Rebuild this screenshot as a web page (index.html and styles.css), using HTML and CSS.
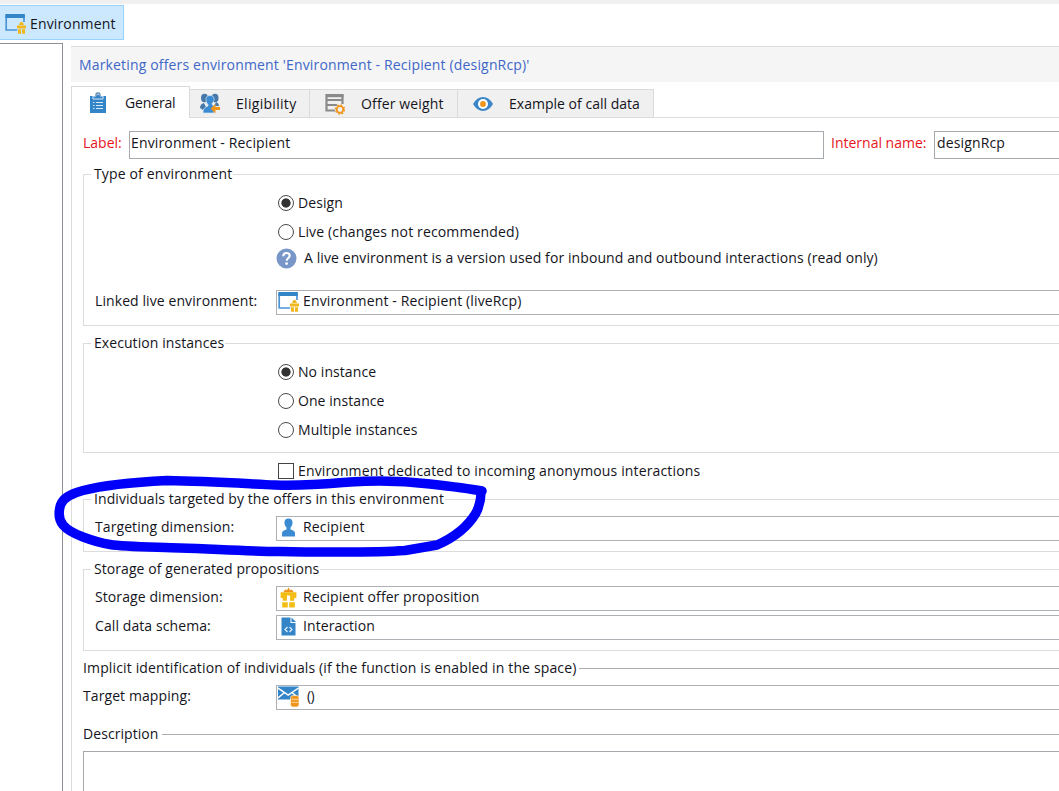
FILE: index.html
```html
<!DOCTYPE html>
<html lang="en">
<head>
<meta charset="utf-8">
<title>Environment</title>
<link rel="stylesheet" href="styles.css">
</head>
<body>
<svg class="defs" aria-hidden="true">
  <symbol id="env" viewBox="0 0 21 21">
    <path d="M1.2 2v15h11M19 2v7" fill="none" stroke="#4a94d6" stroke-width="1.7"/>
    <path d="M.4 1h19.4v4H.4z" fill="#3484c8"/>
    <path d="M12 12.5h9v3h-9zM13 16.3h3v4.4h-3zM17 16.3h3v4.4h-3zM14 12l1-2.500 1.500-.8 1.500.8 1 2.500z" fill="#f0b81c"/>
  </symbol>
  <symbol id="gift" viewBox="0 0 16 20">
    <path d="M3 5l1.800-2.600L6.500 3 8 .5 9.500 3l1.700-.6L13 5z" fill="#f0951c"/>
    <path d="M.5 5h15v5.500h-2V13h-4V8h-3v5h-4v-2.500h-2zM2 14.500h5.300V19.500H2zM8.700 14.500H14V19.500H8.700z" fill="#f2bd14"/>
  </symbol>
</svg>

<header class="toolbar">
  <div class="tool"><svg class="i21"><use href="#env"/></svg><span class="loose">Environment</span></div>
</header>

<div class="workspace">
  <aside class="tree"></aside>
  <main class="main">
    <h1 class="title">Marketing offers environment 'Environment - Recipient (designRcp)'</h1>

    <nav class="tabs">
      <div class="tab active">
        <svg class="tab-icon" viewBox="0 0 20 22"><path d="M2 4h16v17H2z" fill="#3484c8"/><path d="M5 7V4h3a2 2 0 0 1 4 0h3v3z" fill="#3484c8" stroke="#fff" stroke-width=".8"/><path d="M8 4V2.500Q8 1 10 1t2 1.500V4" fill="none" stroke="#5f88ac" stroke-width="1.300"/><path d="M5 10.500h1.500M8 10.500h7M5 13.500h1.500M8 13.500h7M5 16.500h1.500M8 16.500h7" stroke="#d6e9fa" stroke-width="1.200"/></svg>
        <span>General</span>
      </div>
      <div class="tab eligibility">
        <svg class="tab-icon" viewBox="0 0 20 22"><g fill="#4779a8"><ellipse cx="4.500" cy="5" rx="3.500" ry="4.300"/><ellipse cx="15" cy="5" rx="3.500" ry="4.300"/><path d="M0 15q0-4 4-5l2 4-3 3zM19 13q0-3-3-4l-2 4z"/></g><path d="M10 2.500c-3 0-4.200 2-4 4.500.2 2.200 1 3.500 2 4.500v1.500c-3 1-5 2.500-5 7h11v-7l-2-1.500v-1c1-1 2-2.500 2-4 .2-2.500-1-4-4-4z" fill="#3a8bd2" stroke="#d5e7f6" stroke-width=".7"/><path d="M10.500 15.500l5-4.500v3h4.500v3h-4.500v3.500z" fill="#f0951c"/></svg>
        <span>Eligibility</span>
      </div>
      <div class="tab weight">
        <svg class="tab-icon" viewBox="0 0 20 22"><path d="M10 17.500H1.500V2h16v9M2 7h15M2 12h10" fill="none" stroke="#8a8a8a" stroke-width="2.200"/><path d="M1 1.500h17.500v2.700H1z" fill="#8a8a8a"/><circle cx="15" cy="16.500" r="3.300" fill="none" stroke="#f0951c" stroke-width="1.800"/><circle cx="15" cy="16.500" r="4.500" fill="none" stroke="#f0951c" stroke-width="1.400" stroke-dasharray="1.770 1.760"/></svg>
        <span>Offer weight</span>
      </div>
      <div class="tab example">
        <svg class="tab-icon" viewBox="0 0 20 22"><path d="M0 11Q4 4 10 4t10 7q-4 7-10 7T0 11z" fill="#3a86c8"/><circle cx="10" cy="11" r="5" fill="#fff"/><circle cx="10" cy="11" r="2.900" fill="#f0951c"/></svg>
        <span>Example of call data</span>
      </div>
    </nav>

    <section class="panel">
      <div class="names">
        <label class="required lbl">Label:</label>
        <div class="input label-input"><span class="loose">Environment - Recipient</span></div>
        <label class="required internal">Internal name:</label>
        <div class="input name-input"><span class="loose">designRcp</span></div>
      </div>

      <fieldset class="group type">
        <legend class="loose">Type of environment</legend>
        <div class="option"><i class="radio on"></i><span>Design</span></div>
        <div class="option second"><i class="radio"></i><span class="loose">Live (changes not recommended)</span></div>
        <div class="hint"><svg class="i21" viewBox="0 0 21 21"><circle cx="10.500" cy="10.500" r="10" fill="#7897c8"/><path d="M7.300 8.200Q7.300 5 10.500 5t3.200 2.800c0 2.200-3 2.400-3 5" fill="none" stroke="#fff" stroke-width="2.100"/><circle cx="10.600" cy="15.600" r="1.400" fill="#fff"/></svg><span>A live environment is a version used for inbound and outbound interactions (read only)</span></div>
        <div class="row linked"><label>Linked live environment:</label><div class="field"><svg class="i21"><use href="#env"/></svg><span class="loose">Environment - Recipient (liveRcp)</span></div></div>
      </fieldset>

      <fieldset class="group instances">
        <legend>Execution instances</legend>
        <div class="option"><i class="radio on"></i><span>No instance</span></div>
        <div class="option"><i class="radio"></i><span>One instance</span></div>
        <div class="option"><i class="radio"></i><span>Multiple instances</span></div>
      </fieldset>

      <div class="option anonymous"><i class="check"></i><span class="loose">Environment dedicated to incoming anonymous interactions</span></div>

      <fieldset class="group individuals">
        <legend>Individuals targeted by the offers in this environment</legend>
        <div class="row"><label>Targeting dimension:</label><div class="field"><svg class="i21" viewBox="0 0 21 21"><path d="M10.500 1.500c-3 0-4.300 2-4 4.700.2 2 1 3.300 2 4.300v2c-2 .8-4.500 1.500-4.500 3.500V19.500h13V16c0-2-2.500-2.700-4.500-3.500v-2c1-1 1.800-2.300 2-4.300.3-2.700-1-4.700-4-4.700z" fill="#3a8bd2"/></svg><span class="loose">Recipient</span></div></div>
      </fieldset>

      <fieldset class="group storage">
        <legend>Storage of generated propositions</legend>
        <div class="row"><label>Storage dimension:</label><div class="field"><svg class="i21"><use href="#gift"/></svg><span>Recipient offer proposition</span></div></div>
        <div class="row next"><label>Call data schema:</label><div class="field"><svg class="i21" viewBox="0 0 21 21"><path d="M3.500 1.500h9V7h5v12.500h-14z" fill="#3484c8"/><path d="M13.500 1.500l4.500 4.500h-4.500z" fill="#3484c8"/><path d="M9.500 11L7 13.500 9.500 16M11.500 11l2.500 2.500-2.500 2.500" fill="none" stroke="#d8eaf8" stroke-width="1.300"/></svg><span>Interaction</span></div></div>
      </fieldset>

      <h2 class="rule implicit"><span class="loose">Implicit identification of individuals (if the function is enabled in the space)</span></h2>
      <div class="row mapping"><label>Target mapping:</label><div class="field"><svg class="i21" viewBox="0 0 21 21"><path d="M0 .5h20.500v13H0z" fill="#3484c8"/><path d="M0 2l10.200 7L20.500 2M0 12l6.500-5.500M20.500 12L14 6.500" fill="none" stroke="#fff" stroke-width="1.500"/><rect x="12.500" y="9.500" width="8.500" height="11.500" rx="2.500" fill="#f0951c" stroke="#fff" stroke-width=".6"/><path d="M13.500 13.300h7M13.500 16.300h7" stroke="#fbd49c"/></svg><span class="parens">()</span></div></div>

      <h2 class="rule description"><span>Description</span></h2>
      <div class="textarea"></div>
    </section>
  </main>
</div>

<svg class="marker" viewBox="0 0 1059 791"><path d="M482 491C466 488 448 486 430 484C405 481 380 480 350 482C325 484 305 486 275 485C235 483 205 481 167 480.500C137 482 108 484 83 490.500C70 494 63 498 60.500 505C58.500 512 58 519 63 525C68 531 75 534 83 537C91 540 100 543 110 544.500C125 547 160 547 180 548C215 549 240 551 280 551.500C320 552 370 553 405 550.500L437 545C453 538 467 528 476 513C480 505 481 499 481 492"/></svg>
</body>
</html>
```

FILE: styles.css
```css
* { box-sizing: border-box; }

body {
  margin: 0;
  height: 791px;
  overflow: hidden;
  background: #fff;
  color: #14141c;
  font: 14px/18px "Open Sans", "Noto Sans", sans-serif;
  letter-spacing: 0.07px;
  white-space: nowrap;
  display: flex;
  flex-direction: column;
}

h1, h2 { margin: 0; font: inherit; }
svg { flex: none; display: block; }
.loose { letter-spacing: 0.14px; }
.defs { width: 0; height: 0; position: absolute; }
.i21 { width: 21px; height: 21px; }

.toolbar { height: 43px; border-top: 4px solid #f0f0f0; padding-top: 1px; flex: none; }
.tool {
  width: 124px;
  height: 35px;
  padding: 2px 0 0 5px;
  display: flex;
  align-items: center;
  gap: 4px;
  background: #cce8ff;
  border: 1px solid #99d1ff;
  border-left: 0;
}

.workspace { flex: 1; display: flex; }
.tree { width: 63px; border: solid #8d9096; border-width: 1px 1px 0 0; flex: none; }
.main { flex: 1; margin-left: 8px; padding-top: 3px; min-width: 0; display: flex; flex-direction: column; }
.title { height: 36px; background: #f5f5f5; border-top: 1px solid #dcdcdc; padding: 9px 0 0 8px; color: #4067c8; letter-spacing: 0.16px; }

.tabs { height: 36px; padding-top: 4px; display: flex; align-items: flex-end; border-bottom: 1px solid #dcdcdc; flex: none; }
.tab {
  height: 28px;
  display: flex;
  align-items: center;
  background: #f0f0f0;
  border: solid #dadada;
  border-width: 1px 1px 0 0;
}
.tab-icon { width: 20px; height: 22px; margin-right: 16px; }
.tab.active { width: 119px; height: 32px; margin-bottom: -1px; padding: 1px 0 0 16px; background: #fff; border-left-width: 1px; letter-spacing: -0.15px; }
.active .tab-icon { margin-right: 17px; }
.eligibility { width: 120px; padding-left: 10px; letter-spacing: 0.3px; }
.weight { width: 148px; padding-left: 15px; letter-spacing: 0.14px; }
.example { width: 196px; padding-left: 15px; letter-spacing: 0.02px; }

.panel { flex: 1; padding: 13px 0 0 11px; border-left: 1px solid #dcdcdc; }
.names { display: flex; height: 28px; margin-bottom: 6px; }
.required { color: #e8141e; padding-top: 3px; letter-spacing: 0; }
.lbl { width: 46px; }
.internal { width: 103px; }
.input { border: 1px solid #a6a9ad; padding: 2px; }
.label-input { width: 695px; margin-right: 7px; padding-left: 1px; }
.name-input { flex: 1; border-right: 0; }

.group { margin: 0 -10px 0 0; padding: 0; border: 1px solid #dcdcdc; }
.group legend { margin-left: 7px; padding: 0 1px 0 3px; }
.type { height: 161px; padding-top: 6px; }
.instances { height: 119px; margin-top: 8px; padding-top: 5px; }
.individuals { height: 62px; margin-top: 5px; padding-top: 8px; }
.storage { height: 91px; margin-top: 8px; padding-top: 8px; }

.option { height: 29px; padding-left: 194px; display: flex; align-items: center; gap: 4px; }
.type .option { height: 28px; }
.type .second { height: 29px; }
.anonymous { margin-top: 3px; padding-left: 195px; }
.radio { width: 16px; height: 16px; border: 1px solid #4a4a4a; border-radius: 50%; }
.radio.on { background: radial-gradient(circle, #333 4.2px, #fff 5px); }
.check { width: 16px; height: 16px; border: 1px solid #444; }
.hint { height: 24px; padding-left: 192px; display: flex; align-items: center; gap: 7px; letter-spacing: 0.09px; }

.row { display: flex; height: 25px; padding-left: 11px; }
.row label { width: 181px; padding-top: 2px; letter-spacing: 0.09px; }
.linked { margin-top: 20px; }
.next { margin-top: 4px; }
.field { flex: 1; display: flex; align-items: flex-start; gap: 4px; padding-left: 1px; border: 1px solid #adb0b4; }
.field span { padding-top: 1px; }
.field .parens { padding: 1px 0 0 4px; letter-spacing: -0.6px; }

.rule { display: flex; align-items: center; gap: 3px; height: 18px; }
.rule::after { content: ""; flex: 1; height: 1px; background: #adadad; }
.implicit { margin-top: 8px; }
.mapping { margin: 8px -10px 0 0; padding-left: 0; }
.mapping label { width: 193px; }
.description { margin-top: 15px; }
.textarea { height: 60px; margin-top: 8px; border: 1px solid #a6a9ad; border-right: 0; }

.marker { position: absolute; left: 0; top: 0; width: 1059px; height: 791px; }
.marker path { fill: none; stroke: #0000fa; stroke-width: 9.5; stroke-linecap: round; stroke-linejoin: round; }
```
